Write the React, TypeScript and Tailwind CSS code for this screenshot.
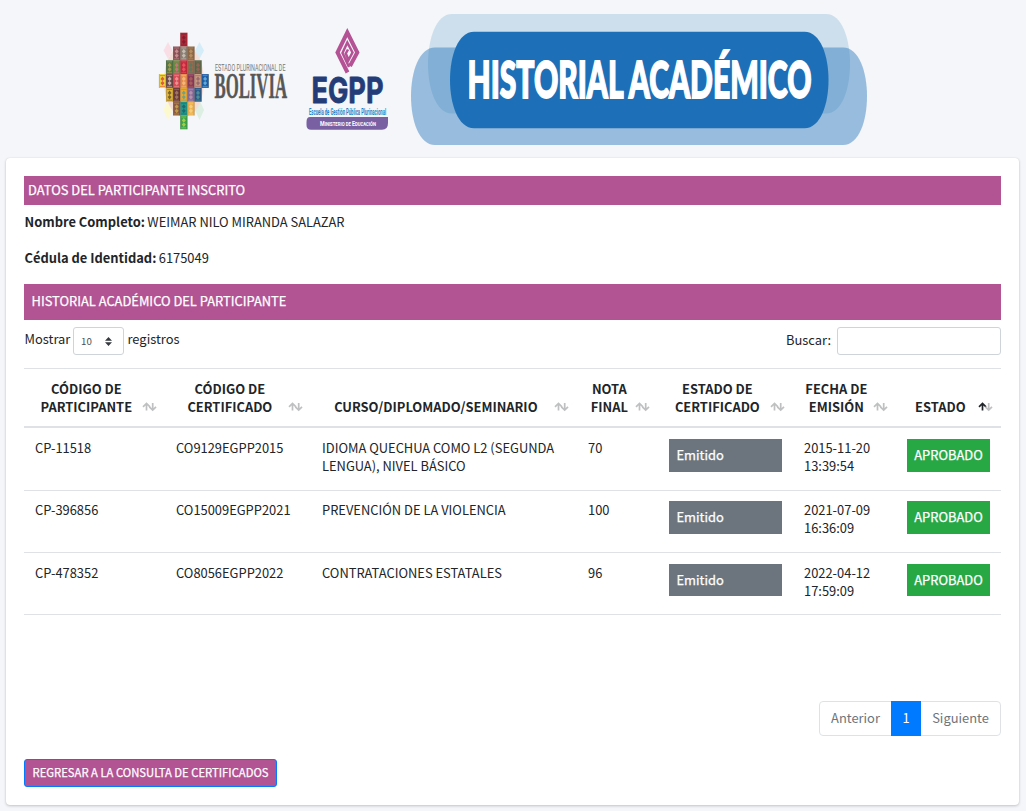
import React from "react";

const TILES: [number, number, string, string][] = [
  [3, 0, "#b52638", "#6d1f2b"],
  [2, 1, "#8a5058", "#d9a0a0"], [3, 1, "#8d8176", "#d9cfc4"], [4, 1, "#8f6a4a", "#c09a6a"],
  [1, 2, "#4f7a4a", "#c8a04a"], [2, 2, "#6a8a42", "#e0708a"], [3, 2, "#c8283c", "#f0606a"], [4, 2, "#9a6a4a", "#4c7c6a"], [5, 2, "#5a6a4a", "#b0605a"],
  [0, 3, "#ecd53a", "#d8323c"], [1, 3, "#6d4848", "#e5d4cc"], [2, 3, "#d84a58", "#f0a8a0"], [3, 3, "#e88a4a", "#f4c88a"], [4, 3, "#8a3a5a", "#b06a5a"], [5, 3, "#c89a80", "#8a5a6a"], [6, 3, "#1c5fa8", "#7ac0e8"],
  [1, 4, "#e0b43c", "#5a4a2a"], [2, 4, "#6a3a3c", "#b08a6a"], [3, 4, "#f0a82c", "#40a0a8"], [4, 4, "#8a6a98", "#c0a0b0"], [5, 4, "#2c5a8a", "#58a09a"],
  [2, 5, "#8c5a42", "#d0b04a"], [3, 5, "#209a8a", "#1c5a6a"], [4, 5, "#eeb04c", "#f6d890"],
  [3, 6, "#3aa84a", "#c8d84a"],
];

function BoliviaLogo() {
  return (
    <svg className="h-[110px] w-[135px] overflow-visible" viewBox="156 28 135 110" role="img" aria-label="Bolivia">
      <path d="M168 42l4.500 8.500-4.500 8.500-4.500-8.500z" fill="#f9dfe5" />
      <path d="M199.500 42l4.500 8.500-4.500 8.500-4.500-8.500z" fill="#d5edf8" />
      <path d="M168 100l4.500 10-4.500 10-4.500-10z" fill="#fdf9cf" />
      <path d="M199.500 100l4.500 10-4.500 10-4.500-10z" fill="#dcefe2" />
      <ellipse cx="184" cy="81" rx="20" ry="36" fill="#f4ddd6" />
      {TILES.map(([c, r, a, b]) => (
        <g key={`${c}-${r}`} transform={`translate(${159 + c * 7.1} ${32.700 + r * 13.8})`}>
          <rect width="7.1" height="13.800" fill={a} />
          <path d="M3.500 2.500l2 2.500-2 2 2 2-2 2.500-2-2.500 2-2-2-2z" fill={b} opacity=".75" />
          <path d="M1 1.500h5M1 12.300h5" stroke={b} strokeWidth=".8" opacity=".6" />
          <path d="M.3 0v13.800M6.800 0v13.800" stroke="#3a2a20" strokeWidth=".6" opacity=".35" />
        </g>
      ))}
      <text x="215" y="71" fontSize="9" textLength="70.500" lengthAdjust="spacingAndGlyphs" fill="#777" className="font-[Roboto,sans-serif]">ESTADO PLURINACIONAL DE</text>
      <text x="214.500" y="98" fontSize="36" fontWeight="700" textLength="72.500" lengthAdjust="spacingAndGlyphs" fill="#575756" stroke="#575756" strokeWidth=".5" className="font-['Liberation_Serif',serif]">BOLIVIA</text>
    </svg>
  );
}

function EgppLogo() {
  return (
    <svg className="h-[110px] w-[86px] overflow-visible" viewBox="304 26 86 110" role="img" aria-label="EGPP">
      <g fill="none" stroke="#b45295">
        <path d="M347.500 72.500L337.500 52.500L347.300 32.500L357.300 52.500L350 66" strokeWidth="4" />
        <path d="M349 67L342.500 53L347.300 42.500L352.500 52.500L348.500 60L345.800 53.500L348 49.500" strokeWidth="2.500" />
      </g>
      <text x="311.500" y="103" fontSize="36" fontWeight="700" textLength="72" lengthAdjust="spacingAndGlyphs" fill="#243c78" stroke="#243c78" strokeWidth=".8" strokeLinejoin="round" className="font-[Inter,sans-serif]">EGPP</text>
      <text x="309" y="114.500" fontSize="8.500" fontWeight="700" textLength="77" lengthAdjust="spacingAndGlyphs" fill="#2384c6" className="font-[Roboto,sans-serif]">Escuela de Gestión Pública Plurinacional</text>
      <path d="M310 117H388V123Q388 129.800 382 129.800H311Q306.500 129.800 306.500 125V122Q306.500 117 310 117Z" fill="#7960a3" />
      <text x="320" y="126.300" fontSize="7.500" fontWeight="700" textLength="56" lengthAdjust="spacingAndGlyphs" fill="#fff" className="font-[Roboto,sans-serif]">
        M<tspan fontSize="6">INISTERIO DE </tspan>E<tspan fontSize="6">DUCACIÓN</tspan>
      </text>
    </svg>
  );
}

function Banner() {
  return (
    <svg className="h-[131px] w-[456px]" viewBox="411 14 456 131" role="img" aria-label="Historial académico">
      <path d="M452 14H826C858 14 858 113.500 826 113.500H452C420 113.500 420 14 452 14Z" fill="#cddfec" />
      <path d="M435 47.500H843C875 47.500 875 145 843 145H435C403 145 403 47.500 435 47.500Z" fill="#1d70b7" fillOpacity=".43" />
      <path d="M474 31.700H804.500C836.500 31.700 836.500 128.200 804.500 128.200H474C442 128.200 442 31.700 474 31.700Z" fill="#1d70b7" />
      <text x="467.500" y="97.700" fontSize="51.500" fontWeight="900" textLength="344" lengthAdjust="spacingAndGlyphs" fill="#fff" stroke="#fff" strokeWidth="1.800" className="font-[Lato,sans-serif]">HISTORIAL ACADÉMICO</text>
    </svg>
  );
}

function SortIcon({ active = false }: { active?: boolean }) {
  return (
    <svg className="mb-1 h-2.5 w-[15px] shrink-0" viewBox="0 0 15 10" fill="none" strokeWidth="1.700">
      <path d="M4.500 8.500V1.500M1 4.800L4.500 1.500L8 4.800" stroke={active ? "#212529" : "#bfc0c1"} />
      <path d="M10.700 1V8M7.300 4.800L10.700 8L14 4.800" stroke="#bfc0c1" />
    </svg>
  );
}

const HEADS: string[][] = [
  ["CÓDIGO DE", "PARTICIPANTE"],
  ["CÓDIGO DE", "CERTIFICADO"],
  ["CURSO/DIPLOMADO/SEMINARIO"],
  ["NOTA", "FINAL"],
  ["ESTADO DE", "CERTIFICADO"],
  ["FECHA DE", "EMISIÓN"],
  ["ESTADO"],
];

const ROWS = [
  { id: "CP-11518", cert: "CO9129EGPP2015", course: ["IDIOMA QUECHUA COMO L2 (SEGUNDA", "LENGUA), NIVEL BÁSICO"], grade: "70", date: "2015-11-20", time: "13:39:54" },
  { id: "CP-396856", cert: "CO15009EGPP2021", course: ["PREVENCIÓN DE LA VIOLENCIA"], grade: "100", date: "2021-07-09", time: "16:36:09" },
  { id: "CP-478352", cert: "CO8056EGPP2022", course: ["CONTRATACIONES ESTATALES"], grade: "96", date: "2022-04-12", time: "17:59:09" },
];

const GRID = "grid grid-cols-[141px_146px_266px_81px_135px_103px_105px]";
const ON_COLOR = "text-white [-webkit-text-stroke:.25px_white]";

export default function App() {
  return (
    <div className="flex h-[811px] w-[1026px] flex-col overflow-hidden bg-[#f4f6f9] font-['Noto_Sans_CJK_SC',sans-serif] text-[12.900px] leading-[18px] text-[#212529]">
      <header className="flex h-[158px] shrink-0 items-start pl-[156px] pt-[14px]">
        <div className="pt-[14px]"><BoliviaLogo /></div>
        <div className="ml-[13px] pt-3"><EgppLogo /></div>
        <div className="ml-[21px]"><Banner /></div>
      </header>
      <main className="ml-[6px] flex h-[647px] w-[1013px] flex-col rounded bg-white px-[18px] pt-[18px] shadow-[0_0_1px_rgba(0,0,0,.13),0_1px_3px_rgba(0,0,0,.2)]">
        <h2 className={`${ON_COLOR} flex h-[29px] items-center bg-[#b25394] pb-0.5 pl-1`}>DATOS DEL PARTICIPANTE INSCRITO</h2>
        <p className="mt-2 pl-[.5px]"><b>Nombre Completo:</b><span className="-ml-[.500px]"> WEIMAR NILO MIRANDA SALAZAR</span></p>
        <p className="mt-[18px] pl-[.5px]"><b>Cédula de Identidad:</b><span className="-ml-[.500px]"> 6175049</span></p>
        <h2 className={`${ON_COLOR} mt-[17px] flex h-9 items-center bg-[#b25394] pb-0.5 pl-[7.500px]`}>HISTORIAL ACADÉMICO DEL PARTICIPANTE</h2>
        <div className="mt-[7px] flex h-[28px] items-center justify-between">
          <div className="flex items-center pl-[.5px]">
            <span className="-mt-1 w-[45.500px]">Mostrar</span>
            <button className="ml-[3px] mr-[3.500px] flex h-[28px] w-[51px] items-center justify-between rounded-[3px] border border-[#ced4da] pl-[7px] pr-[11px] text-[9.700px] text-[#495057]">
              10
              <svg className="h-[9px] w-[7px]" viewBox="0 0 7 9" fill="#343a40"><path d="M3.500 0L7 3.800H0zM0 5.200H7L3.500 9z" /></svg>
            </button>
            <span className="-mt-1">registros</span>
          </div>
          <label className="flex items-center"><span className="-mt-0.5">Buscar:</span><input className="ml-[6px] h-[28px] w-[164px] rounded-[3px] border border-[#ced4da]" /></label>
        </div>
        <div className="mt-[13.200px]">
          <div className={`${GRID} h-[60px] border-b-2 border-t border-b-[#dee2e6] border-t-[#dee2e6] pb-[10px] font-bold`}>
            {HEADS.map((lines, i) => (
              <div key={i} className="flex items-end justify-between pl-[9px] pr-[8.300px]">
                <div className="flex-1 pr-[2px] text-center">{lines.map((l) => <div key={l} className="whitespace-nowrap">{l}</div>)}</div>
                <SortIcon active={i === 6} />
              </div>
            ))}
          </div>
          {ROWS.map((r) => (
            <div key={r.id} className={`${GRID} h-[62.350px] border-b border-[#dee2e6] pt-[10.800px] [&>div]:px-[11px]`}>
              <div>{r.id}</div>
              <div>{r.cert}</div>
              <div>{r.course.map((l) => <div key={l} className="whitespace-nowrap">{l}</div>)}</div>
              <div>{r.grade}</div>
              <div><div className={`${ON_COLOR} h-[32.600px] bg-[#6c757d] pl-[7.500px] leading-[32.500px]`}>Emitido</div></div>
              <div>{r.date}<br />{r.time}</div>
              <div><div className={`${ON_COLOR} h-[32.600px] bg-[#28a745] text-center leading-[32.500px]`}>APROBADO</div></div>
            </div>
          ))}
        </div>
        <nav className="mt-[85.700px] flex h-[35px] w-[182px] shrink-0 self-end rounded-[4px] border border-[#dee2e6] text-[#6c757d]">
          <span className="flex w-[71px] items-center justify-center">Anterior</span>
          <span className="-my-px flex w-[30px] items-center justify-center bg-[#007bff] text-white">1</span>
          <span className="flex flex-1 items-center justify-center">Siguiente</span>
        </nav>
        <button className={`${ON_COLOR} mt-[23px] flex h-[28px] w-[253px] shrink-0 items-center justify-center whitespace-nowrap rounded-[3px] border border-[#007bff] bg-[#b25394] pb-px text-[11.280px]`}>REGRESAR A LA CONSULTA DE CERTIFICADOS</button>
      </main>
    </div>
  );
}
